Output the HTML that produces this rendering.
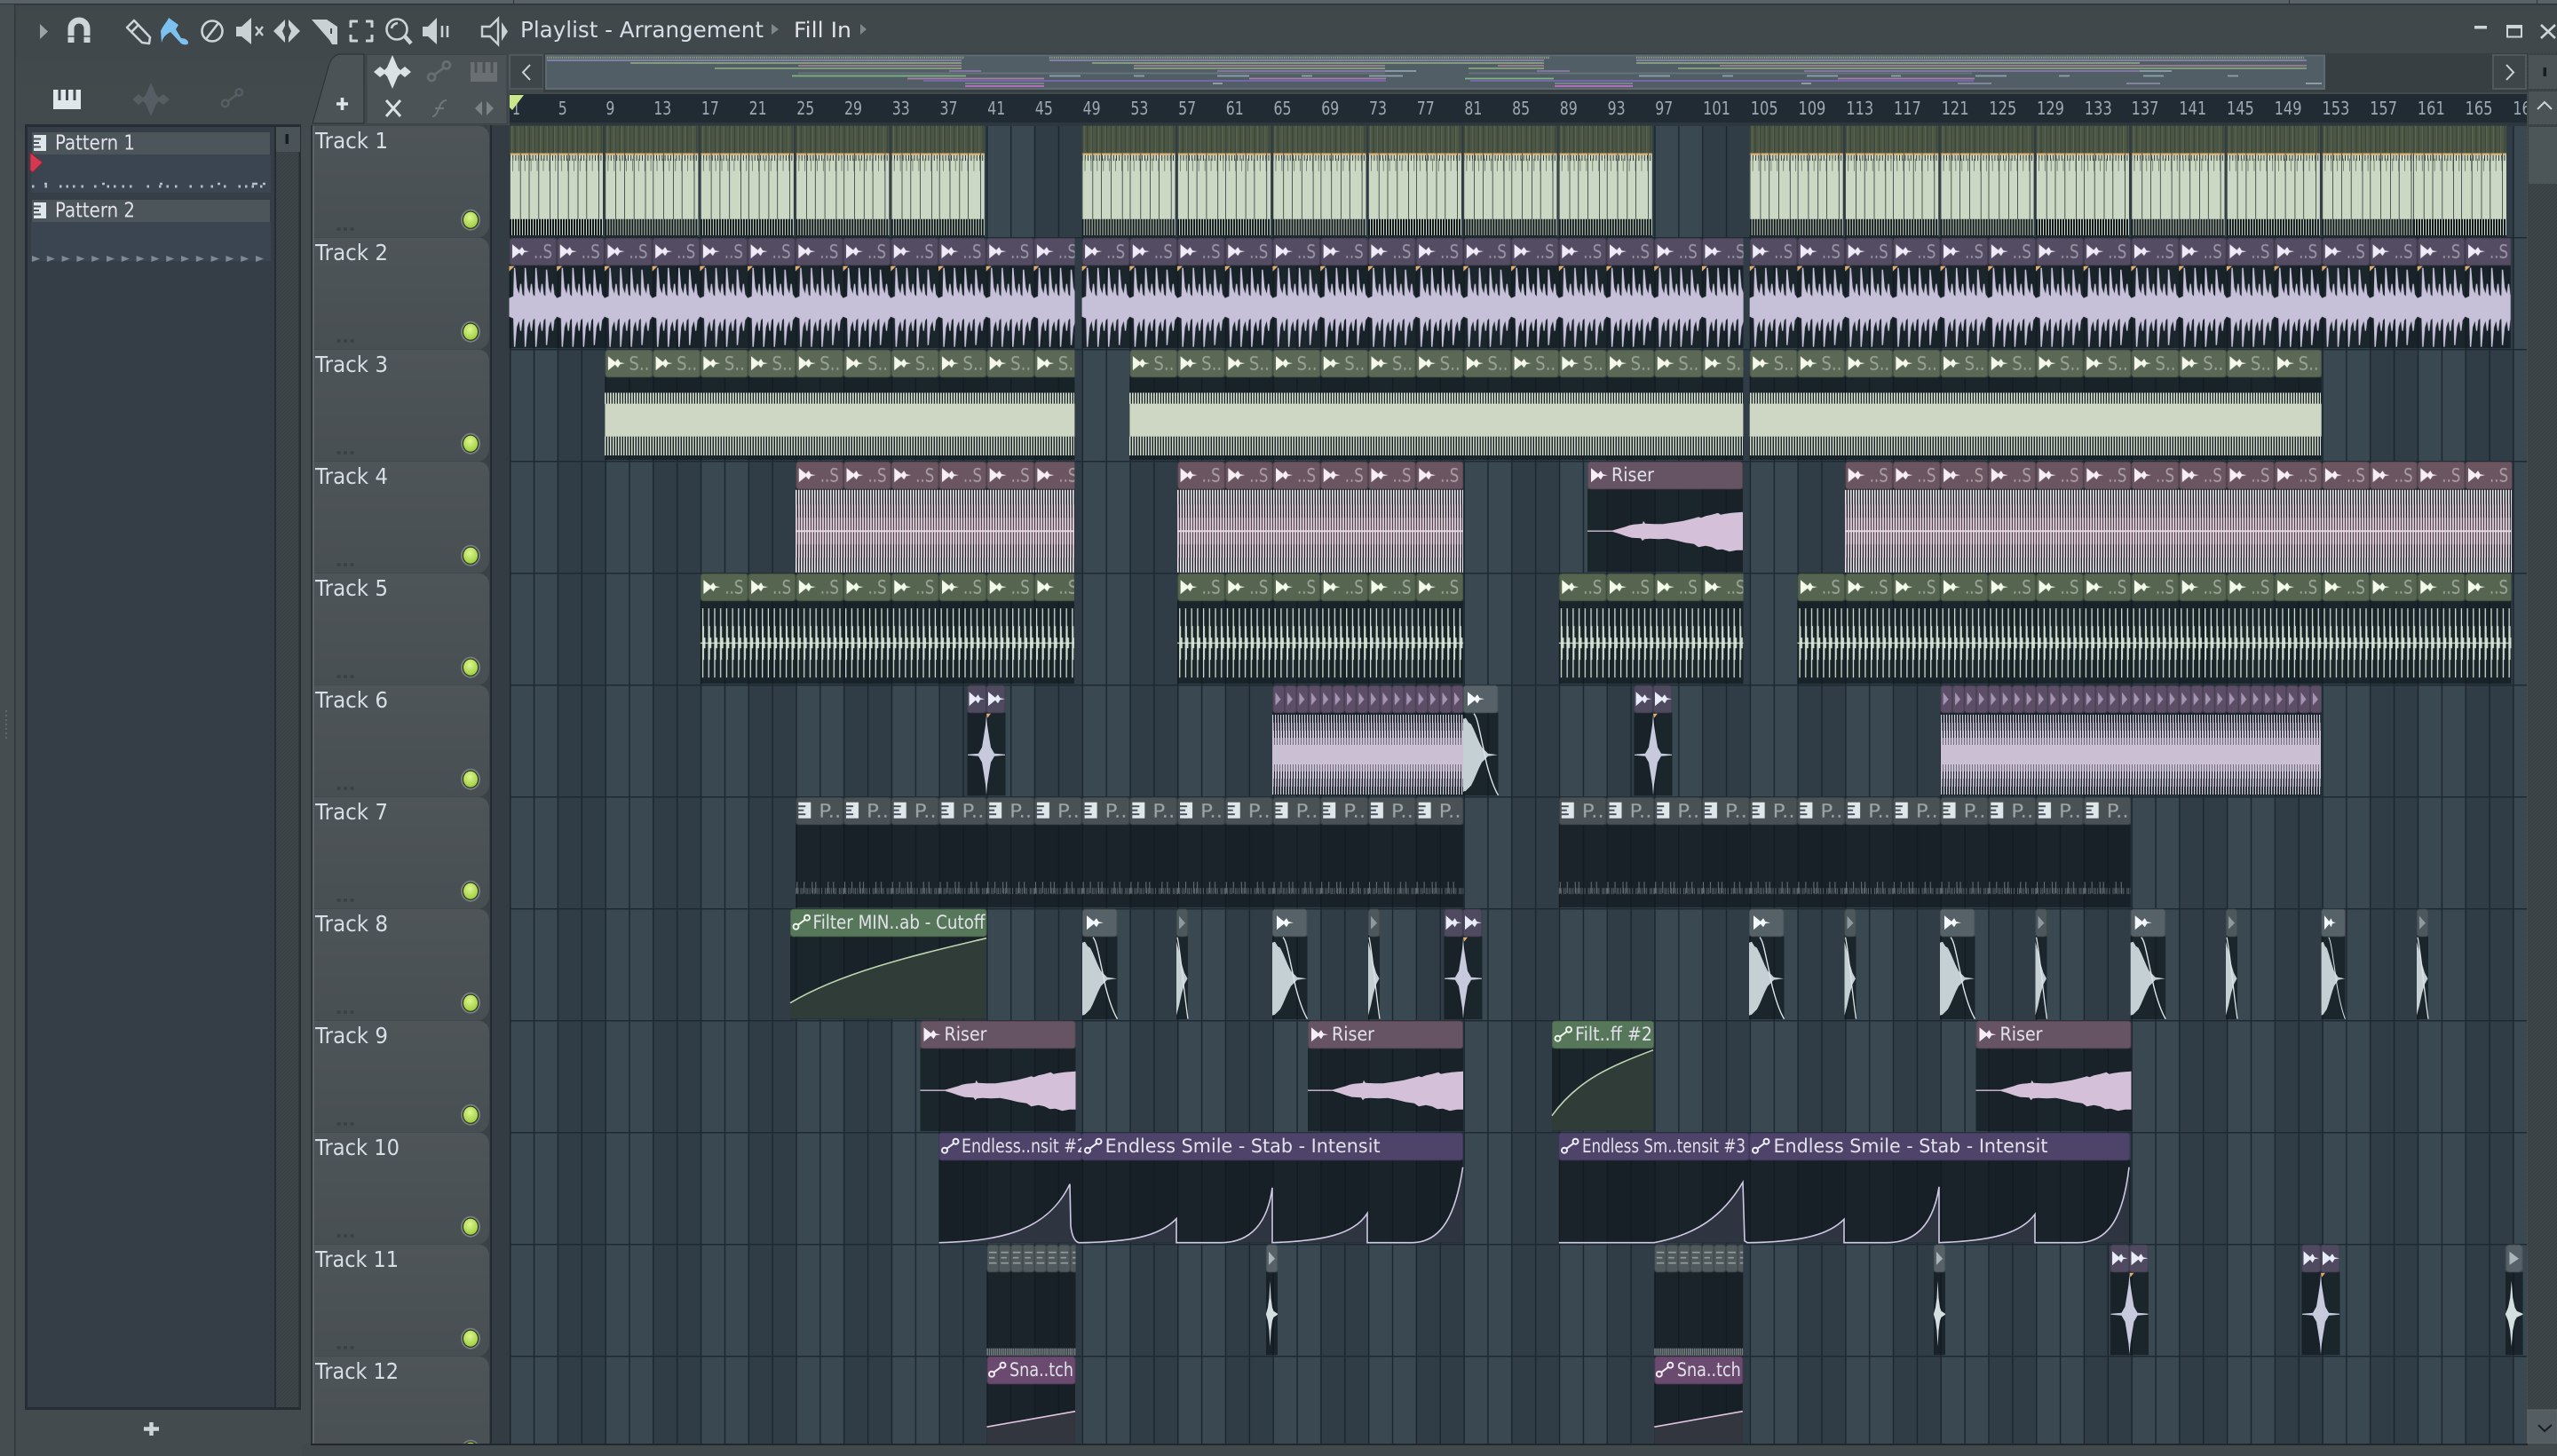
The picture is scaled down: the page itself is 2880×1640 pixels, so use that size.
<!DOCTYPE html>
<html lang="en">
<head>
<meta charset="utf-8">
<title>Playlist - Arrangement</title>
<style>
html,body{margin:0;padding:0;background:#434b4e;width:2880px;height:1640px;overflow:hidden}
svg{display:block}
text{font-family:"DejaVu Sans","Liberation Sans",sans-serif}
.t{font-size:25px;fill:#d6dee6}
.c{font-size:21px;fill:#e2e2ea}
.n{font-size:20px;fill:#9da8b2}
</style>
</head>
<body>
<svg xmlns="http://www.w3.org/2000/svg" width="2880" height="1640" viewBox="0 0 2880 1640">
<defs>
<linearGradient id="bg" x1="0" y1="0" x2="0" y2="1"><stop offset="0" stop-color="#3f474a"/><stop offset=".1" stop-color="#434b4e"/><stop offset="1" stop-color="#434b4e"/></linearGradient>
<linearGradient id="tp" x1="0" y1="0" x2="0" y2="1"><stop offset="0" stop-color="#4e5559"/><stop offset="1" stop-color="#484f53"/></linearGradient>
<radialGradient id="led" cx=".45" cy=".35" r=".7"><stop offset="0" stop-color="#dcf78e"/><stop offset="1" stop-color="#9ccb3c"/></radialGradient>
<linearGradient id="pk" gradientUnits="userSpaceOnUse" x1="0" y1="551.5" x2="0" y2="645"><stop offset="0" stop-color="#f4ecf0"/><stop offset=".5" stop-color="#dcc6d0"/><stop offset="1" stop-color="#f4ecf0"/></linearGradient>
<clipPath id="cg"><rect x="574" y="100" width="2272" height="1526"/></clipPath>
<clipPath id="cp"><rect x="340" y="140" width="240" height="1486"/></clipPath>

<path id="ic" d="M0 -8L8 -1.5L11 -5L13.5 -1L19 0L13.5 1L11 5L8 1.5L0 8Z"/>
<g id="au" fill="none" stroke-width="2"><circle cx="4.5" cy="14" r="3"/><circle cx="17" cy="4" r="3"/><path d="M7 12L15 6"/></g>
<g id="pi"><rect width="14" height="18" fill="#e0e7eb"/><rect y="3.5" width="8" height="2" fill="#47505a"/><rect y="8" width="6" height="2" fill="#47505a"/><rect y="12.5" width="8" height="2" fill="#47505a"/></g>
<path id="wv" d="M-21 0L-14 -6L-9 -2L-6 -5L0 -19L6 -5L9 -2L14 -6L21 0L14 6L9 2L6 5L0 19L-6 5L-9 2L-14 6Z"/>
<path id="spk" d="M0 33L1 45L3 58L5 70L9 77L21 78V79L9 80L5 87L3 99L1 112L0 124L-1 112L-3 99L-5 87L-9 80L-21 79V78L-9 77L-5 70L-3 58L-1 45Z"/>

<pattern id="grid" width="107.44" height="20" patternUnits="userSpaceOnUse">
<rect width="53.72" height="20" fill="#3a4852"/><rect x="53.72" width="53.72" height="20" fill="#303d47"/>
<rect x="0" width="1.4" height="20" fill="#1a252e"/><rect x="26.86" width="1.4" height="20" fill="#1a252e"/><rect x="53.72" width="1.4" height="20" fill="#1a252e"/><rect x="80.58" width="1.4" height="20" fill="#1a252e"/>
</pattern>
<pattern id="hatch" width="4" height="4" patternUnits="userSpaceOnUse"><rect width="4" height="4" fill="#3f4649"/><path d="M0 4L4 0" stroke="#363d40" stroke-width="1"/></pattern>
<pattern id="tri" width="16.8" height="8" patternUnits="userSpaceOnUse"><path d="M0 0L9 3.5L0 7Z" fill="#7d8a96"/></pattern>

<!-- Track 2 clip -->
<pattern id="c2" width="53.72" height="125" patternUnits="userSpaceOnUse">
<rect y="31" width="53.72" height="93.5" fill="#0f171d" opacity=".72"/>
<rect x=".6" y=".6" width="52.5" height="30.4" rx="3" fill="#544c62" stroke="#423d4e"/>
<use href="#ic" x="3.5" y="15.5" fill="#eeeaf8"/>
<text x="27.5" y="23" class="c" style="fill:#9a97a6" textLength="21" lengthAdjust="spacingAndGlyphs">..S</text>
<g id="w2t"><path fill="#c6c0d8" d="M0 68L4.6 66L5.4 34L6.8 34L8.6 56L11 63L12.4 52L13.6 52L15 64L16.8 66L17.4 34L18.8 34L20.6 56L23 63L24.4 52L25.6 52L27 64L28.8 66L29.4 34L30.8 34L32.6 56L35 63L36.4 52L37.6 52L39 64L40.8 66L41.4 36L42.8 36L44.6 56L47 63L48.4 52L49.6 52L51 64L53.72 68V79H0Z"/></g>
<use href="#w2t" transform="matrix(1 0 0 -1 0 157)"/>
<path d="M0 32H6L0 38Z" fill="#e6ae6c"/>
</pattern>
<!-- Track 3 clip -->
<pattern id="c3" width="53.72" height="125" patternUnits="userSpaceOnUse">
<rect y="31" width="53.72" height="93.5" fill="#0f171d" opacity=".72"/>
<rect x=".6" y=".6" width="52.5" height="30.4" rx="3" fill="#5a6855" stroke="#495545"/>
<use href="#ic" x="3.5" y="15.5" fill="#f4f8ea"/>
<text x="27" y="23" class="c" style="fill:#9aa396" textLength="23" lengthAdjust="spacingAndGlyphs">S..</text>
<rect y="61" width="53.72" height="37" fill="#cdd7c3"/>
</pattern>
<!-- Track 4 clip -->
<pattern id="c4" width="53.72" height="125" patternUnits="userSpaceOnUse">
<rect y="31" width="53.72" height="93.5" fill="#0f171d" opacity=".72"/>
<rect x=".6" y=".6" width="52.5" height="30.4" rx="3" fill="#6b5560" stroke="#57464f"/>
<use href="#ic" x="3.5" y="15.5" fill="#f6eef2"/>
<text x="27.5" y="23" class="c" style="fill:#aa9ea4" textLength="21" lengthAdjust="spacingAndGlyphs">..S</text>
</pattern>
<!-- Track 5 clip -->
<pattern id="c5" width="53.72" height="125" patternUnits="userSpaceOnUse">
<rect y="31" width="53.72" height="93.5" fill="#0f171d" opacity=".72"/>
<rect x=".6" y=".6" width="52.5" height="30.4" rx="3" fill="#55654f" stroke="#465440"/>
<use href="#ic" x="3.5" y="15.5" fill="#f4faea"/>
<text x="27.5" y="23" class="c" style="fill:#9ca698" textLength="21" lengthAdjust="spacingAndGlyphs">..S</text>
<path d="M2 78.5H56" stroke="#cdddcb" stroke-width="78" stroke-dasharray="1.3 5.415"/>
<path d="M2 78.5H56" stroke="#cdddcb" stroke-width="38" stroke-dasharray="2.1 4.615"/>
<path d="M2 78.5H56" stroke="#cdddcb" stroke-width="12" stroke-dasharray="3.6 3.115"/>
<rect y="78" width="53.72" height="1.2" fill="#dfe9dc"/>
</pattern>
<!-- Track 6 dense clip -->
<pattern id="c6" width="13.43" height="125" patternUnits="userSpaceOnUse">
<rect y="31" width="13.43" height="93.5" fill="#0f171d" opacity=".72"/>
<rect x=".4" y=".6" width="12.6" height="30.4" rx="3" fill="#5b4e66" stroke="#4b4055"/>
<path d="M3 8V23L9 16Z" fill="#a593b2"/>
</pattern>
<!-- Track 7 clip -->
<pattern id="c7" width="53.72" height="125" patternUnits="userSpaceOnUse">
<rect y="31" width="53.72" height="93.5" fill="#0f171d" opacity=".74"/>
<rect x=".6" y=".6" width="52.5" height="30.4" rx="3" fill="#4a5154" stroke="#3d4447"/>
<use href="#pi" x="3" y="6"/>
<text x="26" y="23" class="c" style="fill:#9ea5a8" textLength="25" lengthAdjust="spacingAndGlyphs">P..</text>
<path d="M0 106H53.72" stroke="#7c8688" stroke-width="7" stroke-dasharray="1 1.2 1 2 1 1 1 3 1 .8 1 1.4 1 2.4 1 1 1 1.8 1 1.2 1 2 1 3 1 1 1 1.62" opacity=".65"/>
<path d="M1 102H53.72" stroke="#7c8688" stroke-width="13" stroke-dasharray="1 7 1 8 1 3 1 13 1 5 1 10.72" opacity=".8"/>
</pattern>
<!-- Track 11 pattern clip -->
<pattern id="c11" width="13.43" height="125" patternUnits="userSpaceOnUse">
<rect y="31" width="13.43" height="93.5" fill="#0f171d" opacity=".74"/>
<rect x=".4" y=".6" width="12.6" height="30.4" rx="3" fill="#50595c" stroke="#424a4d"/>
<path d="M2.5 9H11M2.5 15H9M2.5 21H11" stroke="#9aa3a5" stroke-width="1.6" fill="none"/>
<path d="M0 121H13.43" stroke="#7c8688" stroke-width="8" stroke-dasharray="1.4 .8"/>
</pattern>

<!-- Track 1 segment -->
<g id="s1">
<rect width="105" height="31" fill="#4c5645"/>
<path d="M0 15.5H105" stroke="#3d4739" stroke-width="31" stroke-dasharray="1.4 4"/>
<path d="M2 15.5H105" stroke="#5a6651" stroke-width="31" stroke-dasharray="1.2 6.8"/>
<rect y="31" width="105" height="92.5" fill="#cbd8c3"/>
<rect y="31" width="105" height="2" fill="#e6ae6c"/>
<path d="M0 36.2H105" stroke="#2d3c3a" stroke-width="6.4" stroke-dasharray="1 2.2"/>
<path d="M3 44H105" stroke="#71816f" stroke-width="14" stroke-dasharray=".9 6"/>
<path d="M0 68H105" stroke="#2f3c40" stroke-width="74" stroke-dasharray=".8 11 .8 9 .8 10 .8 12 .8 8 .8 11 .8 10 .8 9 .8 13"/>
<path d="M0 114.3H105" stroke="#10181d" stroke-width="18.4" stroke-dasharray="2 1"/>
<path d="M0 124.3H105" stroke="#161e24" stroke-width="1.5"/>
</g>

<!-- Riser -->
<g id="ris">
<rect y="31" width="175" height="93.5" fill="#0f171d" opacity=".72"/>
<rect x=".5" y=".6" width="174" height="30.4" rx="3" fill="#665363" stroke="#55454f"/>
<use href="#ic" x="4" y="15.5" fill="#f6eef6"/>
<text x="27" y="22.5" class="c" textLength="48" lengthAdjust="spacingAndGlyphs">Riser</text>
<path fill="#d4c0d8" d="M0 77.8H28L36 75.5L43 73.5L47 72L52 71L58 70.5L62 70L63 67L65 70L75 70.5L85 70.5L95 69L102 68L108 67L114 65.5L120 64L125 62.5L128 63.5L133 61.5L140 60L147 58L150 60L155 59L162 58L168 57.5L175 57V100L168 100L160 101.5L152 99L146 99.5L140 96.5L133 95L125 96.5L120 93L110 91.5L100 89L90 87L80 87.5L70 87L64 87.5L62 89.5L60 86.5L50 86L43 84L36 81.5L28 79.2H0Z"/>
</g>

<!-- Sample A / B -->
<g id="sA">
<rect y="31" width="39.5" height="93.5" fill="#0f171d" opacity=".72"/>
<rect x=".5" y=".6" width="38.5" height="30.4" rx="3" fill="#566268" stroke="#475156"/>
<use href="#ic" x="5" y="15.5" fill="#f4f8fa"/>
<path fill="#c4d0d4" d="M0 38L3 37L6 42L9 44L12 50L15 57L18 64L21 70L25 74L28 77L39 78.5L28 80L25 83L21 87L18 93L15 100L12 107L9 113L6 116L3 119L0 120Z"/>
<path d="M12 32C16 36 18 50 23 72C27 95 34 115 39.5 124" fill="none" stroke="#dde5e8" stroke-width="1.4"/>
</g>
<g id="sB">
<rect y="31" width="13" height="93.5" fill="#0f171d" opacity=".72"/>
<rect x=".4" y=".6" width="12.4" height="30.4" rx="3" fill="#4d585d" stroke="#414b50"/>
<path d="M3 8V23L10 16Z" fill="#8d999e"/>
<path fill="#c4d0d4" d="M0 37L3 48L6 62L9 72L12.5 78.5L9 85L6 95L3 109L0 120Z"/>
<path d="M1 32C5 50 8 90 13 124" fill="none" stroke="#dde5e8" stroke-width="1.3"/>
</g>
<g id="dbl">
<rect x="-21.5" y="31" width="43" height="93.5" fill="#0f171d" opacity=".72"/>
<rect x="-21.2" y=".6" width="20.6" height="30.4" rx="3" fill="#4f4a60" stroke="#433f50"/>
<rect x=".2" y=".6" width="20.6" height="30.4" rx="3" fill="#4f4a60" stroke="#433f50"/>
<use href="#ic" x="-19.5" y="15.5" fill="#e8ecf8" transform="translate(-1.5 0) scale(.92 1)"/>
<use href="#ic" x="2" y="15.5" fill="#e8ecf8"/>
<use href="#spk" fill="#c6cadc"/>
<path d="M0 32H5L1 37Z" fill="#e6ae6c"/>
</g>
<g id="nar">
<rect width="13" y="31" height="93.5" fill="#0f171d" opacity=".72"/>
<rect x=".4" y=".6" width="12.4" height="30.4" rx="3" fill="#566268" stroke="#475156"/>
<path d="M3 8V23L10 16Z" fill="#a9b5ba"/>
<path fill="#d4dfe0" d="M4.5 41L5.5 60L7 71L8.5 75L13 78V79L8.5 82L7 86L5.5 97L4.5 115L3.5 97L2 86L0 79V78L2 71L3.5 60Z"/>
</g>

<!-- Track header -->
<g id="th">
<path d="M352 0H537Q551 0 551 14V110Q551 122 541 125.5H352Z" fill="url(#tp)"/>
<rect x="352" width="2" height="126" fill="#5b6367"/>
<ellipse cx="530" cy="106" rx="11" ry="12" fill="#777f82"/>
<ellipse cx="530" cy="106" rx="9.2" ry="10.2" fill="#2d3a1c"/>
<ellipse cx="530" cy="106" rx="8" ry="9" fill="url(#led)"/>
<path d="M379.5 116.3H400" stroke="#394144" stroke-width="3.6" stroke-dasharray="4 3.5"/>
</g>
</defs>

<!-- Window -->
<rect width="2880" height="1640" fill="url(#bg)"/>
<rect width="2880" height="4" fill="#596266"/>
<rect y="4" width="2880" height="1.5" fill="#2e3639"/>
<rect x="578" width="1" height="4" fill="#2e3639"/>
<rect x="2578" width="1" height="4" fill="#2e3639"/>
<rect x="2857" width="1" height="4" fill="#2e3639"/>
<rect y="5" x="0" width="16" height="1635" fill="#454d50"/>
<rect x="16" y="5" width="1.4" height="1635" fill="#2f373a"/>
<path d="M7 800V835" stroke="#5e676b" stroke-width="2" stroke-dasharray="2 3"/>

<!-- Toolbar icons -->
<path d="M45 27L54 35.5L45 44Z" fill="#9aa3a6"/>
<path d="M80 48V32a9 9 0 0 1 18 0V48" fill="none" stroke="#cdd5d9" stroke-width="7"/>
<path d="M76 41h8M94 41h8" stroke="#434b4e" stroke-width="1.5"/>
<g fill="none" stroke="#ccd4d8" stroke-width="2.6" stroke-linejoin="round">
<path d="M143 31L151 23L169 42L168 49L160 48Z"/><path d="M148 36L156 28"/>
<circle cx="239" cy="35" r="11.5"/><path d="M232 44L246 26"/>
<path d="M395 31V24H403M412 24H419V31M419 39V46H412M403 46H395V39" stroke-width="3"/>
<circle cx="447" cy="33" r="11.5"/><path d="M441 32Q442 27 448 26"/>
</g>
<path d="M456 41L463 49" stroke="#ccd4d8" stroke-width="4.5"/>
<path d="M190 20L201 28L198 33L204 43C208 43 212 45 212 48C212 51 207 51 204 49L192 36C187 39 184 41 182 48L181 35C184 28 188 25 190 20Z" fill="#7cc1ef"/>
<path d="M266 30H272L283 20V50L272 41H266Z" fill="#c9d1d5"/>
<path d="M288 30L296 40M296 30L288 40" stroke="#c9d1d5" stroke-width="2.4"/>
<path d="M321 22L308 35L321 48V42L318 35L321 29ZM325 22L338 35L325 48V42L328 35L325 29Z" fill="#c9d1d5"/>
<path d="M351 22H368L380 30V50H374L371 45ZM372 32V38H374V32Z" fill="#c9d1d5" fill-rule="evenodd"/>
<path d="M476 30H482L492 20V50L482 41H476Z" fill="#c9d1d5"/>
<path d="M498 29V42M504 29V42" stroke="#c9d1d5" stroke-width="2.6"/>
<path d="M561 21V50L552 41H543V30H552Z" fill="none" stroke="#c9d1d5" stroke-width="2.4"/>
<path d="M565 25L572 35.5L565 46Z" fill="#c9d1d5"/>
<text x="586" y="42" class="t" fill="#ccd3d8" textLength="274" lengthAdjust="spacingAndGlyphs">Playlist - Arrangement</text>
<path d="M869 27L877 33L869 39Z" fill="#7e888c"/>
<text x="894" y="42" class="c" style="font-size:24px" textLength="65" lengthAdjust="spacingAndGlyphs">Fill In</text>
<path d="M969 27L976 33L969 39Z" fill="#7e888c"/>
<rect x="2787" y="29" width="14" height="3.5" fill="#cdd5d9"/>
<rect x="2824" y="29.5" width="16" height="12" fill="none" stroke="#cdd5d9" stroke-width="2"/><rect x="2823" y="28" width="18" height="4" fill="#cdd5d9"/>
<path d="M2862 28L2878 43M2878 28L2862 43" stroke="#cdd5d9" stroke-width="2.6"/>

<!-- Picker tool icons -->
<rect x="60" y="101" width="31" height="22" fill="#e0e7eb"/>
<path d="M67 101v12M75.5 101v12M84 101v12" stroke="#434b4e" stroke-width="3"/>
<use href="#wv" transform="translate(170 112)" fill="#555e62"/>
<use href="#au" transform="translate(248 99) scale(1.25)" stroke="#555e62"/>

<!-- Picker panel -->
<rect x="29.5" y="141.5" width="308" height="1445" fill="#353d47" stroke="#262e33" stroke-width="3"/>
<rect x="309" y="143" width="27.5" height="1442" fill="url(#hatch)"/>
<rect x="309" y="143" width="2" height="1442" fill="#262e33"/>
<rect x="311" y="143" width="27" height="28" fill="#4a5357"/>
<rect x="321.5" y="151" width="3.5" height="11" fill="#171d20"/>
<rect x="36" y="149" width="268" height="25" fill="#4c555a"/>
<rect x="35" y="174" width="270" height="43" fill="#3b4551"/>
<rect x="36" y="225" width="268" height="25" fill="#4c555a"/>
<rect x="35" y="250" width="270" height="44" fill="#3b4551"/>
<use href="#pi" x="38" y="152"/>
<use href="#pi" x="38" y="228"/>
<text x="62" y="168.5" class="c" style="font-size:23px" fill="#d6dee6" textLength="90" lengthAdjust="spacingAndGlyphs">Pattern 1</text>
<text x="62" y="244.5" class="c" style="font-size:23px" fill="#d6dee6" textLength="90" lengthAdjust="spacingAndGlyphs">Pattern 2</text>
<path d="M34 172L48 183L37 194L34 192Z" fill="#d23a52" stroke="#8a2536"/>
<path d="M36 210H304" stroke="#b6bec6" stroke-width="3" stroke-dasharray="2.5 12 2.5 14 2.5 5 2.5 5 2.5 7 2.5 12 2.5 12 2.5 5 2.5 7 2.5 6 2.5 17 2.5 11 2.5 6 2.5 7 2.5 14 2.5 10 2.5 9"/>
<path d="M50 207H304" stroke="#b6bec6" stroke-width="2.5" stroke-dasharray="3 62 3 62 3 62 3 36 6 6"/>
<rect transform="translate(36 288)" width="262" height="7" fill="url(#tri)"/>
<path d="M162 1609.5H179M170.5 1602V1617" stroke="#cdd5d9" stroke-width="4.5"/>

<!-- Playlist tabs -->
<path d="M352 139L370 75Q374 61 384 61H410V139Z" fill="#4b5357" stroke="#2d3438" stroke-width="1.2"/>
<path d="M379 117H392M385.5 110V124" stroke="#dfe6ea" stroke-width="3.6"/>
<rect x="413" y="61.5" width="158" height="78" fill="#4b5357" stroke="#3a4246"/>
<use href="#wv" transform="translate(442 81)" fill="#dbe2e6"/>
<use href="#au" transform="translate(480 68) scale(1.35)" stroke="#686f73"/>
<rect x="530" y="70" width="30" height="22" fill="#696f73"/>
<path d="M536 70v12M545 70v12M554 70v12" stroke="#4b5357" stroke-width="3"/>
<path d="M435 113L451 131M451 113L435 131" stroke="#dbe2e6" stroke-width="3"/>
<path d="M487 131C495 131 493 113 503 113M490 122H500" fill="none" stroke="#6f777b" stroke-width="2"/>
<path d="M543 114L535 122L543 130ZM548 114L556 122L548 130Z" fill="#7b8387"/>
<rect x="574" y="62" width="38" height="38" fill="#3e464a" stroke="#505a5e" stroke-width="2"/>
<path d="M597 73L589 81.5L597 90" fill="none" stroke="#cdd5d9" stroke-width="2"/>
<rect x="612" y="60" width="2236" height="44" fill="#383f43"/>
<rect x="615" y="62.5" width="2003" height="37.5" fill="#515e66" stroke="#5f6b71" stroke-width="2"/>
<rect x="2808" y="62" width="37" height="38" fill="#3e464a" stroke="#505a5e" stroke-width="2"/>
<path d="M2823 73L2831 81.5L2823 90" fill="none" stroke="#cdd5d9" stroke-width="2"/>
<!-- Overview lanes -->
<g fill="none" stroke-width="1.7">
<path d="M616 65H1086M1182 65H1745M1843 65H2595" stroke="#94a48c" stroke-width="2.4" stroke-dasharray="1.2 1.2"/>
<path d="M616 68H1083M1182 68H1739M1843 68H2598" stroke="#8c84ae"/>
<path d="M710 71H1083M1230 71H1739M1843 71H2410" stroke="#8aa584"/>
<path d="M899 74H1083M1277 74H1560M1687 74H1739M1937 74H2598" stroke="#9c7f8a"/>
<path d="M805 77H1083M1277 77H1560M1654 77H1739M1890 77H2598" stroke="#88a282"/>
<path d="M1069 80H1105M1371 80H1560M1731 80H1768M2032 80H2410" stroke="#8a78aa"/>
<path d="M1560 80H1595M2410 80H2446" stroke="#8ea3ad"/>
<path d="M899 82.5H1560M1654 82.5H2221" stroke="#677479"/>
<path d="M892 85.5H1088" stroke="#7fb482"/>
<path d="M1182 85.5H1217M1277 85.5H1289M1371 85.5H1407M1466 85.5H1478M1542 85.5H1580M1846 85.5H1881M1940 85.5H1952M2035 85.5H2070M2130 85.5H2141M2225 85.5H2260M2319 85.5H2331M2414 85.5H2437M2509 85.5H2521" stroke="#8ea3ad"/>
<path d="M1022 88.5H1176M1407 88.5H1561M2070 88.5H2224" stroke="#a97ea6"/>
<path d="M1650 88.5H1750" stroke="#7fb482"/>
<path d="M1040 91H1561M1656 91H2223" stroke="#7a68b2"/>
<path d="M1087 94H1176M1751 94H1839" stroke="#7b8a8e"/>
<path d="M1366 94H1377M2029 94H2040M2597 94H2615" stroke="#94a8a8"/>
<path d="M2205 94H2243M2395 94H2433" stroke="#8a8aa8"/>
<path d="M1087 97H1176M1751 97H1839" stroke="#c070c4"/>
</g>

<!-- Scrollbar right -->
<rect x="2847" y="60" width="33" height="1566" fill="url(#hatch)"/>
<rect x="2848" y="62" width="32" height="38" fill="#4b5357"/>
<rect x="2864.5" y="76" width="3.5" height="10" fill="#171d20"/>
<rect x="2848" y="103" width="32" height="37" fill="#4b5357"/>
<path d="M2858 123L2866 115L2874 123" fill="none" stroke="#cdd5d9" stroke-width="2"/>
<rect x="2848" y="143" width="32" height="64" fill="#4c5558"/>
<rect x="2847" y="1588" width="33" height="38" fill="#545d61" stroke="#5f686c"/>
<path d="M2859 1605L2866 1612L2874 1605" fill="none" stroke="#171d20" stroke-width="2"/>

<!-- Timeline -->
<rect x="574" y="106" width="2272" height="32" fill="#212b33"/>
<rect x="574" y="138" width="2272" height="4" fill="#2d373e"/>
<g clip-path="url(#cg)">
<text x="577" y="129" class="n" textLength="9" lengthAdjust="spacingAndGlyphs">1</text>
<text x="628.7" y="129" class="n" textLength="10" lengthAdjust="spacingAndGlyphs">5</text>
<text x="682.4" y="129" class="n" textLength="10" lengthAdjust="spacingAndGlyphs">9</text>
<text x="736.2" y="129" class="n" textLength="20" lengthAdjust="spacingAndGlyphs">13</text>
<text x="789.9" y="129" class="n" textLength="20" lengthAdjust="spacingAndGlyphs">17</text>
<text x="843.6" y="129" class="n" textLength="20" lengthAdjust="spacingAndGlyphs">21</text>
<text x="897.3" y="129" class="n" textLength="20" lengthAdjust="spacingAndGlyphs">25</text>
<text x="951" y="129" class="n" textLength="20" lengthAdjust="spacingAndGlyphs">29</text>
<text x="1004.8" y="129" class="n" textLength="20" lengthAdjust="spacingAndGlyphs">33</text>
<text x="1058.5" y="129" class="n" textLength="20" lengthAdjust="spacingAndGlyphs">37</text>
<text x="1112.2" y="129" class="n" textLength="20" lengthAdjust="spacingAndGlyphs">41</text>
<text x="1165.9" y="129" class="n" textLength="20" lengthAdjust="spacingAndGlyphs">45</text>
<text x="1219.6" y="129" class="n" textLength="20" lengthAdjust="spacingAndGlyphs">49</text>
<text x="1273.4" y="129" class="n" textLength="20" lengthAdjust="spacingAndGlyphs">53</text>
<text x="1327.1" y="129" class="n" textLength="20" lengthAdjust="spacingAndGlyphs">57</text>
<text x="1380.8" y="129" class="n" textLength="20" lengthAdjust="spacingAndGlyphs">61</text>
<text x="1434.5" y="129" class="n" textLength="20" lengthAdjust="spacingAndGlyphs">65</text>
<text x="1488.2" y="129" class="n" textLength="20" lengthAdjust="spacingAndGlyphs">69</text>
<text x="1542" y="129" class="n" textLength="20" lengthAdjust="spacingAndGlyphs">73</text>
<text x="1595.7" y="129" class="n" textLength="20" lengthAdjust="spacingAndGlyphs">77</text>
<text x="1649.4" y="129" class="n" textLength="20" lengthAdjust="spacingAndGlyphs">81</text>
<text x="1703.1" y="129" class="n" textLength="20" lengthAdjust="spacingAndGlyphs">85</text>
<text x="1756.8" y="129" class="n" textLength="20" lengthAdjust="spacingAndGlyphs">89</text>
<text x="1810.6" y="129" class="n" textLength="20" lengthAdjust="spacingAndGlyphs">93</text>
<text x="1864.3" y="129" class="n" textLength="20" lengthAdjust="spacingAndGlyphs">97</text>
<text x="1918" y="129" class="n" textLength="31" lengthAdjust="spacingAndGlyphs">101</text>
<text x="1971.7" y="129" class="n" textLength="31" lengthAdjust="spacingAndGlyphs">105</text>
<text x="2025.4" y="129" class="n" textLength="31" lengthAdjust="spacingAndGlyphs">109</text>
<text x="2079.2" y="129" class="n" textLength="31" lengthAdjust="spacingAndGlyphs">113</text>
<text x="2132.9" y="129" class="n" textLength="31" lengthAdjust="spacingAndGlyphs">117</text>
<text x="2186.6" y="129" class="n" textLength="31" lengthAdjust="spacingAndGlyphs">121</text>
<text x="2240.3" y="129" class="n" textLength="31" lengthAdjust="spacingAndGlyphs">125</text>
<text x="2294" y="129" class="n" textLength="31" lengthAdjust="spacingAndGlyphs">129</text>
<text x="2347.8" y="129" class="n" textLength="31" lengthAdjust="spacingAndGlyphs">133</text>
<text x="2400.5" y="129" class="n" textLength="31" lengthAdjust="spacingAndGlyphs">137</text>
<text x="2454.2" y="129" class="n" textLength="31" lengthAdjust="spacingAndGlyphs">141</text>
<text x="2507.9" y="129" class="n" textLength="31" lengthAdjust="spacingAndGlyphs">145</text>
<text x="2561.6" y="129" class="n" textLength="31" lengthAdjust="spacingAndGlyphs">149</text>
<text x="2615.4" y="129" class="n" textLength="31" lengthAdjust="spacingAndGlyphs">153</text>
<text x="2669.1" y="129" class="n" textLength="31" lengthAdjust="spacingAndGlyphs">157</text>
<text x="2722.8" y="129" class="n" textLength="31" lengthAdjust="spacingAndGlyphs">161</text>
<text x="2776.5" y="129" class="n" textLength="31" lengthAdjust="spacingAndGlyphs">165</text>
<text x="2830.2" y="129" class="n" textLength="31" lengthAdjust="spacingAndGlyphs">169</text>
</g>
<path d="M574 107H590L577 124L574 121Z" fill="#c9e68a"/>

<!-- Track headers -->
<rect x="350" y="141" width="2" height="1486" fill="#2a3236"/>
<rect x="352" y="141" width="200" height="1486" fill="#3a4246"/>
<rect x="552" y="141" width="22" height="1486" fill="#343c43"/>
<rect x="552" y="141" width="2" height="1486" fill="#232b30"/>
<g clip-path="url(#cp)">
<use href="#th" y="141.7"/><use href="#th" y="267.7"/><use href="#th" y="393.7"/><use href="#th" y="519.7"/>
<use href="#th" y="645.7"/><use href="#th" y="771.7"/><use href="#th" y="897.7"/><use href="#th" y="1023.7"/>
<use href="#th" y="1149.7"/><use href="#th" y="1275.7"/><use href="#th" y="1401.7"/><use href="#th" y="1527.7"/>
</g>
<text x="355" y="167" class="t" textLength="82" lengthAdjust="spacingAndGlyphs">Track 1</text>
<text x="355" y="293" class="t" textLength="82" lengthAdjust="spacingAndGlyphs">Track 2</text>
<text x="355" y="419" class="t" textLength="82" lengthAdjust="spacingAndGlyphs">Track 3</text>
<text x="355" y="545" class="t" textLength="82" lengthAdjust="spacingAndGlyphs">Track 4</text>
<text x="355" y="671" class="t" textLength="82" lengthAdjust="spacingAndGlyphs">Track 5</text>
<text x="355" y="797" class="t" textLength="82" lengthAdjust="spacingAndGlyphs">Track 6</text>
<text x="355" y="923" class="t" textLength="82" lengthAdjust="spacingAndGlyphs">Track 7</text>
<text x="355" y="1049" class="t" textLength="82" lengthAdjust="spacingAndGlyphs">Track 8</text>
<text x="355" y="1175" class="t" textLength="82" lengthAdjust="spacingAndGlyphs">Track 9</text>
<text x="355" y="1301" class="t" textLength="95" lengthAdjust="spacingAndGlyphs">Track 10</text>
<text x="355" y="1427" class="t" textLength="94" lengthAdjust="spacingAndGlyphs">Track 11</text>
<text x="355" y="1553" class="t" textLength="94" lengthAdjust="spacingAndGlyphs">Track 12</text>

<!-- Grid -->
<rect transform="translate(574 142)" width="2272" height="1484" fill="url(#grid)"/>
<rect x="574" y="142" width="1.5" height="1484" fill="#1a252e"/>
<g fill="#1e2a33">
<rect x="574" y="267" width="2272" height="1.5"/><rect x="574" y="393" width="2272" height="1.5"/><rect x="574" y="519" width="2272" height="1.5"/>
<rect x="574" y="645" width="2272" height="1.5"/><rect x="574" y="771" width="2272" height="1.5"/><rect x="574" y="897" width="2272" height="1.5"/>
<rect x="574" y="1023" width="2272" height="1.5"/><rect x="574" y="1149" width="2272" height="1.5"/><rect x="574" y="1275" width="2272" height="1.5"/>
<rect x="574" y="1401" width="2272" height="1.5"/><rect x="574" y="1527" width="2272" height="1.5"/>
</g>

<!-- Track 1 -->
<g transform="translate(0 141.7)">
<use href="#s1" x="574"/><use href="#s1" x="681.4"/><use href="#s1" x="788.9"/><use href="#s1" x="896.3"/><use href="#s1" x="1003.8"/>
<use href="#s1" x="1218.6"/><use href="#s1" x="1326.1"/><use href="#s1" x="1433.5"/><use href="#s1" x="1541"/><use href="#s1" x="1648.4"/><use href="#s1" x="1755.8"/>
<use href="#s1" x="1970.7"/><use href="#s1" x="2078.2"/><use href="#s1" x="2185.6"/><use href="#s1" x="2293"/><use href="#s1" x="2400.5"/><use href="#s1" x="2507.9"/><use href="#s1" x="2615.4"/><use href="#s1" x="2718"/>
</g>

<!-- Track 2 -->
<rect transform="translate(573.5 267.7)" width="637" height="125" fill="url(#c2)"/>
<rect transform="translate(1218.6 267.7)" width="745" height="125" fill="url(#c2)"/>
<rect transform="translate(1970.7 267.7)" width="857" height="125" fill="url(#c2)"/>
<!-- Track 3 -->
<rect transform="translate(681.4 393.7)" width="529" height="125" fill="url(#c3)"/>
<rect transform="translate(1272.4 393.7)" width="691" height="125" fill="url(#c3)"/>
<rect transform="translate(1970.7 393.7)" width="644" height="125" fill="url(#c3)"/>
<path d="M681 448.7H1210M1272 448.7H1963M1971 448.7H2614" fill="none" stroke="#d4dcca" stroke-width="12.7" stroke-dasharray="1.7 1.3"/>
<path d="M681 502.3H1210M1272 502.3H1963M1971 502.3H2614" fill="none" stroke="#d4dcca" stroke-width="21.3" stroke-dasharray="1.5 1.5"/>
<!-- Track 4 -->
<rect transform="translate(896.3 519.7)" width="314" height="125" fill="url(#c4)"/>
<rect transform="translate(1326.1 519.7)" width="322" height="125" fill="url(#c4)"/>
<rect transform="translate(2078.2 519.7)" width="751" height="125" fill="url(#c4)"/>
<g fill="none">
<path d="M896 598.2H1210M1326 598.2H1648M2078 598.2H2829" stroke="url(#pk)" stroke-width="93" stroke-dasharray="1.6 1.4"/>
<path d="M896 598.2H1210M1326 598.2H1648M2078 598.2H2829" stroke="#dcc4d0" stroke-width="60" stroke-dasharray="2 1" opacity=".6"/>
<path d="M896 598.2H1210M1326 598.2H1648M2078 598.2H2829" stroke="#dcc4d0" stroke-width="30" stroke-dasharray="2.4 .6" opacity=".6"/>
<path d="M896 598.2H1210M1326 598.2H1648M2078 598.2H2829" stroke="#e6d6de" stroke-width="2"/>
</g>
<use href="#ris" transform="translate(1788 519.7)"/>
<!-- Track 5 -->
<rect transform="translate(788.9 645.7)" width="421" height="125" fill="url(#c5)"/>
<rect transform="translate(1326.1 645.7)" width="322" height="125" fill="url(#c5)"/>
<rect transform="translate(1755.8 645.7)" width="207.7" height="125" fill="url(#c5)"/>
<rect transform="translate(2024.4 645.7)" width="804" height="125" fill="url(#c5)"/>
<!-- Track 6 -->
<use href="#dbl" transform="translate(1111 771.7)"/>
<rect transform="translate(1433.5 771.7)" width="215" height="125" fill="url(#c6)"/>
<use href="#sA" transform="translate(1648 771.7)"/>
<use href="#dbl" transform="translate(1862 771.7)"/>
<rect transform="translate(2185.6 771.7)" width="429" height="125" fill="url(#c6)"/>
<g fill="none">
<path d="M1433 850H1648M2186 850H2614" stroke="#d8cee0" stroke-width="90" stroke-dasharray="1.2 1.8"/>
<path d="M1433 850H1648M2186 850H2614" stroke="#d2c6da" stroke-width="72" stroke-dasharray="1.6 1.4"/>
<path d="M1433 850H1648M2186 850H2614" stroke="#cdc1d6" stroke-width="54" stroke-dasharray="2 1"/>
<path d="M1433 850H1648M2186 850H2614" stroke="#cbbfd4" stroke-width="38" stroke-dasharray="2.5 .5"/>
<path d="M1433 850H1648M2186 850H2614" stroke="#cbbfd4" stroke-width="22"/>
</g>
<!-- Track 7 -->
<rect transform="translate(896.3 897.7)" width="752" height="125" fill="url(#c7)"/>
<rect transform="translate(1755.8 897.7)" width="644" height="125" fill="url(#c7)"/>

<!-- Track 8 -->
<g transform="translate(0 1023.7)">
<g transform="translate(890 0)">
<rect y="31" width="221" height="93.5" fill="#0f171d" opacity=".72"/>
<path d="M0 106C60 70 150 50 221 33V124H0Z" fill="#2f3c38"/>
<path d="M0 106C60 70 150 50 221 33" fill="none" stroke="#bcd6b2" stroke-width="1.6"/>
<rect x=".5" y=".6" width="220.5" height="30.4" rx="3" fill="#57775a" stroke="#486349"/>
<use href="#au" x="2" y="6" stroke="#eef6ea"/>
<text x="25.5" y="22.5" class="c" textLength="194" lengthAdjust="spacingAndGlyphs">Filter MIN..ab - Cutoff</text>
</g>
<use href="#sA" x="1219"/><use href="#sB" x="1325"/><use href="#sA" x="1433"/><use href="#sB" x="1541"/>
<use href="#dbl" x="1648"/>
<use href="#sA" x="1970"/><use href="#sB" x="2077.5"/><use href="#sA" x="2185"/><use href="#sB" x="2292.5"/><use href="#sA" x="2399.7"/><use href="#sB" x="2507"/>
<use href="#sA" transform="translate(2614.6 0) scale(.68 1)"/><use href="#sB" x="2722"/>
</g>

<!-- Track 9 -->
<use href="#ris" transform="translate(1036.5 1149.7)"/>
<use href="#ris" transform="translate(1473 1149.7)"/>
<use href="#ris" transform="translate(2225.5 1149.7)"/>
<g transform="translate(1748 1149.7)">
<rect y="31" width="114.5" height="93.5" fill="#0f171d" opacity=".72"/>
<path d="M0 107C30 65 70 50 114 33V124H0Z" fill="#2f3c38"/>
<path d="M0 107C30 65 70 50 114 33" fill="none" stroke="#bcd6b2" stroke-width="1.6"/>
<rect x=".5" y=".6" width="114" height="30.4" rx="3" fill="#57775a" stroke="#486349"/>
<use href="#au" x="2" y="6" stroke="#eef6ea"/>
<text x="26" y="22.5" class="c" textLength="87" lengthAdjust="spacingAndGlyphs">Filt..ff #2</text>
</g>

<!-- Track 10 -->
<g transform="translate(0 1275.7)">
<rect x="1057.7" y="31" width="590" height="93.5" fill="#0f171d" opacity=".74"/>
<rect x="1755.8" y="31" width="644" height="93.5" fill="#0f171d" opacity=".74"/>
<g fill="#2e3540">
<path d="M1057.7 124C1130 122 1180 110 1205 58L1206 105Q1208 122 1215 124Z"/>
<path d="M1218 124C1270 123 1305 118 1325 97V124Z"/>
<path d="M1325 124H1375C1410 124 1428 100 1433 62V124Z"/>
<path d="M1433 124C1490 122 1525 115 1540 91V124Z"/>
<path d="M1540 124H1590C1625 124 1640 90 1647.6 39V124Z"/>
<path d="M1863 124C1910 115 1940 95 1963 56L1966 124Z"/>
<path d="M1970.7 124C2030 123 2060 115 2077 97.6V124Z"/>
<path d="M2077 124H2125C2160 124 2178 100 2184 61V124Z"/>
<path d="M2184 124C2240 122 2275 115 2292 92V124Z"/>
<path d="M2292 124H2340C2378 124 2392 90 2398 39V124Z"/>
</g>
<g fill="none" stroke="#cfc8e4" stroke-width="1.6">
<path d="M1057.7 124C1130 122 1180 110 1205 58L1206 105Q1208 122 1215 124H1218C1270 123 1305 118 1325 97V124H1375C1410 124 1428 100 1433 62V124C1490 122 1525 115 1540 91V124H1590C1625 124 1640 90 1647.6 39"/>
<path d="M1755.8 124H1863C1910 115 1940 95 1963 56L1965 122L1968 124H1970.7C2030 123 2060 115 2077 97.6V124H2125C2160 124 2178 100 2184 61V124C2240 122 2275 115 2292 92V124H2340C2378 124 2392 90 2398 39"/>
</g>
<rect x="1057.7" y=".6" width="160.5" height="30.4" rx="3" fill="#4e4369" stroke="#40375a"/>
<use href="#au" x="1059.5" y="6" stroke="#eef0f8"/>
<text x="1083" y="22.5" class="c" textLength="141" lengthAdjust="spacingAndGlyphs">Endless..nsit #2</text>
<rect x="1218.6" y=".6" width="429" height="30.4" rx="3" fill="#4e4369" stroke="#40375a"/>
<rect x="1755.8" y=".6" width="214" height="30.4" rx="3" fill="#4e4369" stroke="#40375a"/>
<rect x="1970.7" y=".6" width="428" height="30.4" rx="3" fill="#4e4369" stroke="#40375a"/>
<use href="#au" x="1220.5" y="6" stroke="#eef0f8"/><use href="#au" x="1757.5" y="6" stroke="#eef0f8"/><use href="#au" x="1972.5" y="6" stroke="#eef0f8"/>
<text x="1244.6" y="22.5" class="c" textLength="310" lengthAdjust="spacingAndGlyphs">Endless Smile - Stab - Intensit</text>
<text x="1782" y="22.5" class="c" textLength="184" lengthAdjust="spacingAndGlyphs">Endless Sm..tensit #3</text>
<text x="1997.5" y="22.5" class="c" textLength="309" lengthAdjust="spacingAndGlyphs">Endless Smile - Stab - Intensit</text>
</g>

<!-- Track 11 -->
<rect transform="translate(1111.5 1401.7)" width="100" height="125" fill="url(#c11)"/>
<rect transform="translate(1863.3 1401.7)" width="100" height="125" fill="url(#c11)"/>
<use href="#nar" transform="translate(1426 1401.7)"/>
<use href="#nar" transform="translate(2178 1401.7)"/>
<use href="#dbl" transform="translate(2398.5 1401.7)"/>
<use href="#dbl" transform="translate(2614 1401.7)"/>
<use href="#nar" transform="translate(2822 1401.7) scale(1.5 1)"/>

<!-- Track 12 -->
<g transform="translate(1111.5 1527.7)">
<rect y="31" width="99.5" height="68" fill="#0f171d" opacity=".74"/>
<path d="M0 79.5L99.5 62V99H0Z" fill="#34363f"/>
<path d="M0 79.5L99.5 62" stroke="#e2c4e0" stroke-width="1.6" fill="none"/>
<rect x=".5" y=".6" width="99" height="30.4" rx="3" fill="#6a4a6e" stroke="#583d5c"/>
<use href="#au" x="1" y="6" stroke="#f2eaf4"/>
<text x="25.5" y="22.5" class="c" textLength="72" lengthAdjust="spacingAndGlyphs">Sna..tch</text>
</g>
<g transform="translate(1863.3 1527.7)">
<rect y="31" width="99.5" height="68" fill="#0f171d" opacity=".74"/>
<path d="M0 79.5L99.5 62V99H0Z" fill="#34363f"/>
<path d="M0 79.5L99.5 62" stroke="#e2c4e0" stroke-width="1.6" fill="none"/>
<rect x=".5" y=".6" width="99" height="30.4" rx="3" fill="#6a4a6e" stroke="#583d5c"/>
<use href="#au" x="1" y="6" stroke="#f2eaf4"/>
<text x="25.5" y="22.5" class="c" textLength="72" lengthAdjust="spacingAndGlyphs">Sna..tch</text>
</g>

<!-- Bottom -->
<rect x="340" y="1626" width="2540" height="14" fill="#41494c"/>
<rect x="350" y="1626" width="2497" height="2" fill="#20282d"/>
</svg>
</body>
</html>
